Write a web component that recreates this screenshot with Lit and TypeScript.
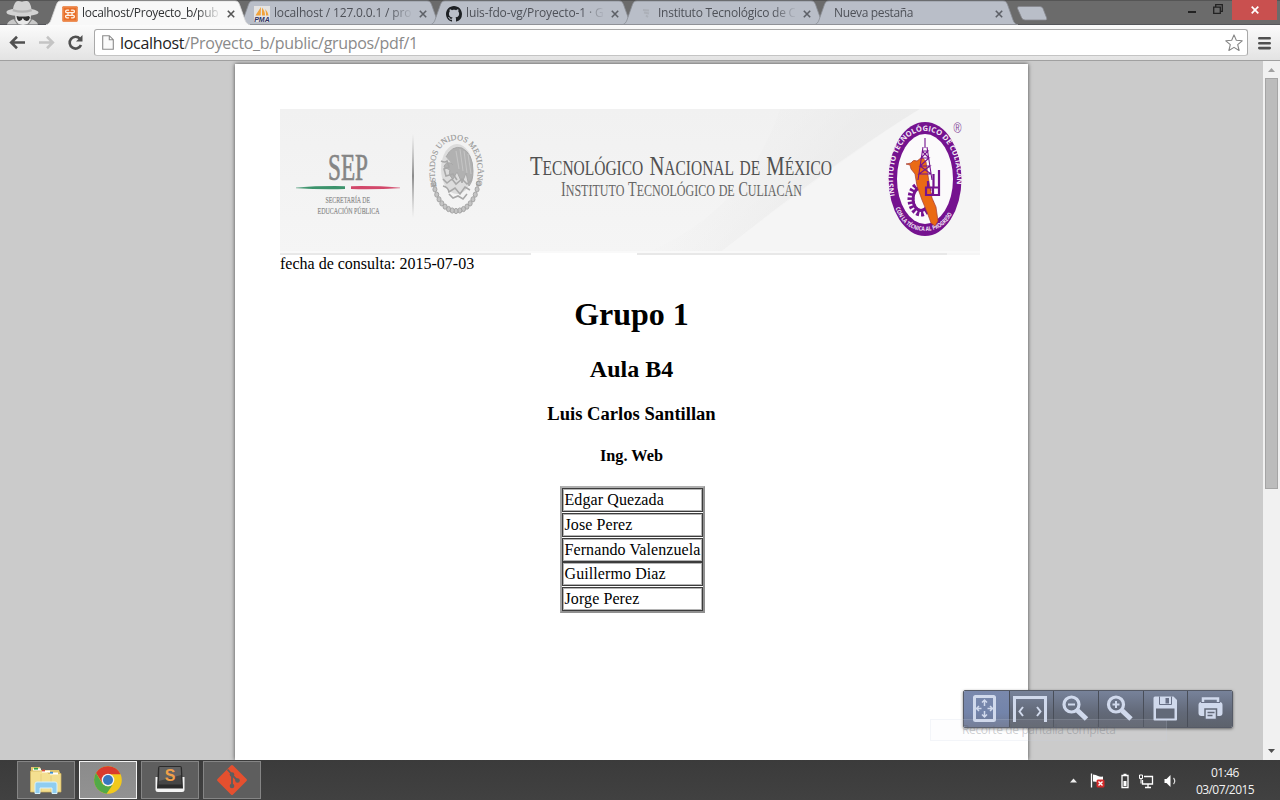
import { LitElement, html, css, svg, nothing } from "lit";
import { customElement, property } from "lit/decorators.js";

type Tab = { title: string; icon: string; active?: boolean; tracking: string };

const TABS: Tab[] = [
  { title: "localhost/Proyecto_b/pub", icon: "xampp", active: true, tracking: "-0.28px" },
  { title: "localhost / 127.0.0.1 / pro", icon: "pma", tracking: "-0.16px" },
  { title: "luis-fdo-vg/Proyecto-1 · G", icon: "github", tracking: "-0.11px" },
  { title: "Instituto Tecnológico de C", icon: "faint", tracking: "-0.25px" },
  { title: "Nueva pestaña", icon: "", tracking: "-0.35px" },
];

const STUDENTS = ["Edgar Quezada", "Jose Perez", "Fernando Valenzuela", "Guillermo Diaz", "Jorge Perez"];

const favicon = (name: string) => {
  switch (name) {
    case "xampp":
      return html`<svg width="16" height="16" viewBox="0 0 16 16">
        <rect x=".3" y=".3" width="15.4" height="15.4" rx="1" fill="#e8702a" />
        <rect x="1.2" y="1.2" width="13.6" height="13.6" rx="1" fill="none" stroke="#f29a62" stroke-width=".7" />
        <path d="M6.500 4.200H5Q3.600 4.200 3.600 5.400T5 6.700H11Q12.400 6.700 12.400 5.400T11 4.200H9.500M6.500 11.800H5Q3.600 11.800 3.600 10.500T5 9.300H11Q12.400 9.300 12.400 10.500T11 11.800H9.500M6 6.700v2.600M10 6.700v2.600" fill="none" stroke="#fff3e8" stroke-width="1.300" stroke-linecap="round" />
      </svg>`;
    case "pma":
      return html`<svg width="16" height="16" viewBox="0 0 16 16">
        <rect width="16" height="16" fill="#e4e3e2" />
        <path d="M7 1C5 4 3 7 1.500 9.500h5.200zM8 1.500v8h3C11 6.500 10 4 8 1.500zM11 3c1 2.500 1.200 4.500 1 6.500h2.500C14 7 13 5 11 3z" fill="#f0a23a" />
        <text class="pma" x=".2" y="15.600" textLength="15.600" lengthAdjust="spacingAndGlyphs">PMA</text>
      </svg>`;
    case "github":
      return html`<svg width="16" height="16" viewBox="0 0 16 16">
        <path fill="#1d2024" d="M8 0C3.580 0 0 3.580 0 8c0 3.540 2.290 6.530 5.470 7.590.4.070.55-.17.55-.38 0-.19-.01-.82-.01-1.490-2.010.37-2.530-.49-2.690-.94-.09-.23-.48-.94-.82-1.130-.28-.15-.68-.52-.01-.53.63-.01 1.080.58 1.230.82.72 1.210 1.870.87 2.330.66.07-.52.28-.87.51-1.070-1.780-.2-3.640-.89-3.640-3.950 0-.87.31-1.590.82-2.150-.08-.2-.36-1.020.08-2.120 0 0 .67-.21 2.200.82.64-.18 1.320-.27 2-.27s1.360.09 2 .27c1.530-1.040 2.200-.82 2.200-.82.44 1.100.16 1.920.08 2.120.51.56.82 1.270.82 2.150 0 3.070-1.870 3.750-3.650 3.950.29.25.54.73.54 1.480 0 1.070-.01 1.930-.01 2.200 0 .21.15.46.55.38A8.010 8.010 0 0 0 16 8c0-4.420-3.580-8-8-8z" />
      </svg>`;
    case "faint":
      return html`<svg width="16" height="16" viewBox="0 0 16 16">
        <path d="M5 4l6 .5M6 6.500l5 1M8 9.500l2 1.500" stroke="#acb0b8" stroke-width="2" fill="none" />
      </svg>`;
  }
  return nothing;
};

@customElement("browser-tab")
class BrowserTab extends LitElement {
  @property({ attribute: false }) tab!: Tab;
  static styles = css`
    :host { display: grid; width: 204px; height: 25px; margin-right: -12px; flex: none; }
    :host([active]) { z-index: 2; }
    .shape, .body { grid-area: 1 / 1; }
    .shape { display: block; }
    .body { display: flex; align-items: center; padding: 2px 12px 0 16px; box-sizing: border-box; height: 25px; z-index: 1; min-width: 0; }
    .body svg { display: block; flex: none; }
    .title { flex: 1; min-width: 0; margin: -1px 0 0 4px; overflow: hidden; white-space: nowrap; font: 12px/18px "Open Sans", sans-serif; color: #4e5158;
      -webkit-mask-image: linear-gradient(90deg, #000 calc(100% - 22px), transparent calc(100% + 2px)); mask-image: linear-gradient(90deg, #000 calc(100% - 22px), transparent calc(100% + 2px)); }
    .title.on { color: #303234; }
    .title.bare { margin-left: 4px; }
    .close { margin: 0 3px 0 8px; }
    .pma { font: italic bold 7px "Liberation Sans", sans-serif; fill: #2f3364; }
  `;
  render() {
    const t = this.tab;
    return html`
      <svg class="shape" width="204" height="25" viewBox="0 0 204 25">
        <path d="M0 25c3-1 4-2.500 5-5L10.500 4.500C11.500 2 12.500 1 15 1H189c2.500 0 3.500 1 4.500 3.500L199 20c1 2.500 2 4 5 5z"
          fill=${t.active ? "#f8f8f8" : "#b9bec8"} stroke=${t.active ? "#d9d9d9" : "#8c8f97"} stroke-width=".8" />
        ${t.active ? svg`<path d="M2 25h200" stroke="#f8f8f8" stroke-width="2"/>` : svg`<path d="M0 24.500h204" stroke="#8f9197"/>`}
      </svg>
      <div class="body">
        ${favicon(t.icon)}
        <span class="title ${t.active ? "on" : ""} ${t.icon ? "" : "bare"}" style="letter-spacing:${t.tracking}">${t.title}</span>
        <svg class="close" width="8" height="8" viewBox="0 0 8 8"><path d="M.8.8l6.400 6.400M7.200.8L.8 7.200" stroke=${t.active ? "#555" : "#5d6067"} stroke-width="1.600" /></svg>
      </div>`;
  }
}

@customElement("letterhead-banner")
class LetterheadBanner extends LitElement {
  static styles = css`
    :host { display: block; height: 146px; }
    svg { display: block; }
    .serif { font-family: "Liberation Serif", serif; }
    .badge { font: bold 7.500px "Open Sans", sans-serif; fill: #f2e9f5; }
    .small { font-size: 6px; }
  `;
  render() {
    const beads = Array.from({ length: 17 }, (_, i) => {
      const a = ((14 + i * 9.500) * Math.PI) / 180;
      return svg`<ellipse cx=${176 + 23 * Math.cos(a)} cy=${66 + 36 * Math.sin(a)} rx="2" ry="2.600" fill="#c4c4c4" stroke="#a4a4a4" stroke-width="1"/>`;
    });
    return html`<svg width="700" height="146" viewBox="0 0 700 146">
      <defs>
        <linearGradient id="bg" x1="0" y1="0" x2="0" y2="1"><stop offset="0" stop-color="#f1f1f1" /><stop offset="1" stop-color="#f5f5f5" /></linearGradient>
        <linearGradient id="fold" gradientUnits="userSpaceOnUse" x1="430" y1="40" x2="520" y2="100"><stop offset="0" stop-color="#ececec" stop-opacity="0" /><stop offset="1" stop-color="#e9e9e9" /></linearGradient>
        <linearGradient id="bar" x1="0" y1="0" x2="0" y2="1"><stop offset="0" stop-color="#aaa" stop-opacity="0" /><stop offset=".5" stop-color="#8c8c8c" /><stop offset="1" stop-color="#aaa" stop-opacity="0" /></linearGradient>
        <linearGradient id="gl" gradientUnits="userSpaceOnUse" x1="16" x2="65" y1="0" y2="0"><stop offset="0" stop-color="#3c936c" stop-opacity=".7" /><stop offset=".25" stop-color="#3c936c" /></linearGradient>
        <linearGradient id="rl" gradientUnits="userSpaceOnUse" x1="71" x2="120" y1="0" y2="0"><stop offset=".75" stop-color="#d2486a" /><stop offset="1" stop-color="#d2486a" stop-opacity=".7" /></linearGradient>
        <path id="eagle" d="M156.500 78C150 44 163 31 176 31S202 44 196 78" />
        <path id="top" d="M615 88C607 50 624 22 645 22S683 50 675 88" />
        <path id="low" d="M615.500 99C622 117 634 122 645 122S668 117 674.500 99" />
      </defs>
      <rect width="700" height="146" fill="url(#bg)" />
      <path d="M370 142C440 112 480 60 500 0H640C565 45 480 112 442 142z" fill="url(#fold)" opacity=".6" />
      <path d="M442 142C500 98 590 30 640 0H700V142z" fill="#f5f5f5" />
      <path d="M0 143H700" stroke="#fdfdfd" stroke-width="1" />
      <path d="M0 145H251M357 145H667" stroke="#e4e4e4" stroke-width="1.500" />
      <path d="M251 145H357" stroke="#fff" stroke-width="2" />

      <g class="serif" fill="#858585" stroke="#858585">
        <text x="48" y="70.500" font-size="38" stroke-width=".7" textLength="40" lengthAdjust="spacingAndGlyphs">SEP</text>
        <g stroke-width=".15" font-size="9">
          <text x="45.500" y="93.500" textLength="44.500" lengthAdjust="spacingAndGlyphs">SECRETARÍA DE</text>
          <text x="37.500" y="104.500" textLength="62" lengthAdjust="spacingAndGlyphs">EDUCACIÓN PÚBLICA</text>
        </g>
      </g>
      <path d="M16 78.400q24-1.600 49-1.200v2.800q-25 .6-49-.8z" fill="url(#gl)" />
      <path d="M71 77.200q25-.4 49 1.200v.8q-24 1.400-49 .8z" fill="url(#rl)" />
      <rect x="132" y="25" width="2" height="84" fill="url(#bar)" />

      <g fill="none" stroke="#a8a8a8">
        <ellipse cx="177" cy="60" rx="16" ry="25" fill="#dcdcdc" stroke="none" />
        <path d="M166 48q6-12 16-9q11 6 11 23q0 10-4 15l-3-13-4 10-5-11-4 7q-5-4-3-9l-6-3q1-5 7-4l2 2" fill="#b1b1b1" stroke-width="1" />
        <path d="M180 40l3 22M184 42l3 22M188 45l3 20M176 42l3 18" stroke="#cacaca" stroke-width=".8" />
        <path d="M161 52q4 2 6 0l2 6-5 2 2 7 7-2 4 6M163 70l4 4 5-4 4 5 6-5 5 5 5-4M163 77q5 1 6 6l6-4 5 6 5-7 5 3M169 85l4 4 5-2 5 3 4-5" stroke-width="1.600" />
      </g>
      ${beads}
      <text class="serif" font-size="8" fill="#999" stroke="#999" stroke-width=".15"><textPath href="#eagle" textLength="120" lengthAdjust="spacingAndGlyphs">ESTADOS UNIDOS MEXICANOS</textPath></text>

      <g class="serif" fill="#505050">
        <text x="250" y="66" font-size="21" word-spacing="3" textLength="302" lengthAdjust="spacingAndGlyphs"><tspan font-size="28">T</tspan>ECNOLÓGICO <tspan font-size="28">N</tspan>ACIONAL DE <tspan font-size="28">M</tspan>ÉXICO</text>
        <text x="281" y="87" font-size="17.500" word-spacing="1" fill="#666" textLength="241" lengthAdjust="spacingAndGlyphs"><tspan font-size="20.500">I</tspan>NSTITUTO <tspan font-size="20.500">T</tspan>ECNOLÓGICO DE <tspan font-size="20.500">C</tspan>ULIACÁN</text>
      </g>

      <ellipse cx="645" cy="70" rx="36.500" ry="57" fill="#75128f" />
      <ellipse cx="645" cy="70" rx="28" ry="45" fill="#fbfafb" />
      <text class="badge"><textPath href="#top" startOffset="1" textLength="150" lengthAdjust="spacingAndGlyphs">INSTITUTO TECNOLÓGICO DE CULIACÁN</textPath></text>
      <text class="badge small"><textPath href="#low" textLength="74" lengthAdjust="spacingAndGlyphs">CON LA TÉCNICA AL PROGRESO</textPath></text>
      <ellipse cx="641" cy="90" rx="10" ry="14" fill="none" stroke="#75128f" stroke-width="7" stroke-dasharray="2.400 1.700" />
      <ellipse cx="641" cy="90" rx="8" ry="11.500" fill="none" stroke="#75128f" stroke-width="3" />
      <path d="M651 74l8 23-7-6z" fill="#fbfafb" />
      <path d="M632 54q2-4 6-2 3-3 6-3l3 4 3 20 3 16 4 9 2 14-3 5-4-3-4-11-5-12-5-14-2-12-4-5-1-4-4-1z" fill="#ea6a14" stroke="#a63c36" stroke-width=".7" transform="translate(-1 0)" />
      <path d="M645 29v10M643 38l-5 33M647 38l5 33M642 42h6l-7 7h8l-9 8h10l-11 8h12M642 42l7 7-9 8 11 8" fill="none" stroke="#75128f" stroke-width="1.100" />
      <path d="M645 78.500h15M645 86h15M646 78v9M653 79v7M659 61v26M653.500 65v13M648 72v7" stroke="#75128f" stroke-width="2.200" />
      <text x="673.500" y="24" font-size="14" fill="#86499b" textLength="8" lengthAdjust="spacingAndGlyphs" font-family="Liberation Sans, sans-serif">®</text>
    </svg>`;
  }
}

@customElement("pdf-page")
class PdfPage extends LitElement {
  static styles = css`
    :host { display: block; width: 793px; height: 696px; margin: 4px 0 0 235px; box-sizing: border-box; padding: 45px 45px 0; background: #fff; box-shadow: 0 0 4px rgba(0,0,0,.65); font: 16px/18px "Liberation Serif", serif; color: #000; overflow: hidden; }
    p, h1, h2, h3, h4 { margin: 0; }
    h1, h2, h3, h4 { text-align: center; }
    letterhead-banner { width: 700px; }
    h1 { font-size: 32px; line-height: 37px; margin-top: 23px; }
    h2 { font-size: 24px; line-height: 28px; margin-top: 22px; }
    h3 { font-size: 18.600px; line-height: 22px; margin-top: 20px; }
    h4 { font-size: 16.300px; line-height: 18px; margin-top: 22px; }
    .list { width: 145px; box-sizing: border-box; margin: 21px 0 0 280px; display: grid; gap: .8px; padding: 0; border: 2px solid; border-color: #b0b0b0 #909090 #909090 #a4a4a4; }
    .cell { height: 24px; line-height: 22px; box-sizing: border-box; border: 1px solid #3c3c3c; box-shadow: inset 0 0 0 1px #b4b4b4; padding-left: 1.500px; white-space: nowrap; letter-spacing: .09px; }
  `;
  render() {
    return html`<letterhead-banner></letterhead-banner>
      <p>fecha de consulta: 2015-07-03</p>
      <h1>Grupo 1</h1><h2>Aula B4</h2><h3>Luis Carlos Santillan</h3><h4>Ing. Web</h4>
      <div class="list">${STUDENTS.map((s) => html`<div class="cell">${s}</div>`)}</div>`;
  }
}

@customElement("viewer-controls")
class ViewerControls extends LitElement {
  static styles = css`
    :host { display: flex; width: 270px; height: 38px; box-sizing: border-box; border: 1px solid #555a66; border-radius: 2px; overflow: hidden; box-shadow: 0 1px 3px rgba(0,0,0,.5); }
    .btn { flex: 1; display: flex; align-items: center; justify-content: center; padding: 0 2px 2px 0; box-sizing: border-box; background: linear-gradient(#77829a, #626978 60%, #5d626c); border-left: 1px solid #494e59; }
    .btn:first-child { padding-right: 3px; border-left: 0; background: linear-gradient(#7a89ad, #7384aa 60%, #6d7791); }
    svg { display: block; }
  `;
  render() {
    const c = "#d0d9ec";
    const icons = [
      svg`<rect x="3.500" y="2.500" width="20" height="24" rx="1" fill="none" stroke=${c} stroke-width="3"/><path d="M13.500 6v6M13.500 17v6M5.500 14.500h5M16.500 14.500h5M11 8.500L13.500 6 16 8.500M11 20.500l2.500 2.500 2.500-2.500M8 12l-2.500 2.500L8 17M19 12l2.500 2.500L19 17" fill="none" stroke=${c} stroke-width="1.500"/>`,
      svg`<path d="M-2.500 28V3.500H28.500V28" fill="none" stroke=${c} stroke-width="3"/><path d="M6 13L2.500 17.500 6 22M20 13l3.500 4.500-3.500 4.500" fill="none" stroke=${c} stroke-width="2"/>`,
      svg`<circle cx="9.500" cy="10.500" r="7.500" fill="none" stroke=${c} stroke-width="3.200"/><path d="M6 10.500h7" stroke=${c} stroke-width="2"/><path d="M15.500 16.500l9 8.500" stroke=${c} stroke-width="5"/>`,
      svg`<circle cx="10" cy="10.500" r="7.500" fill="none" stroke=${c} stroke-width="3.200"/><path d="M6.500 10.500h7M10 7v7" stroke=${c} stroke-width="2"/><path d="M16 16.500l9 8.500" stroke=${c} stroke-width="5"/>`,
      svg`<path d="M4 2.500H22.500l3.500 3.500v19.500q0 1-1 1H3.500q-1 0-1-1V4q0-1.500 1.500-1.500z" fill=${c}/><path d="M8.500 2.500v8h12v-8" fill="none" stroke="#687086"/><rect x="14.500" y="4" width="3.500" height="5.500" fill="#687086"/><rect x="5" y="14.500" width="18.500" height="10" fill="#626978"/>`,
      svg`<g transform="translate(1 0)"><path d="M6 4.500h15v5H6z" fill="none" stroke=${c} stroke-width="2.500"/><rect x="1.500" y="8" width="24" height="14" rx="3" fill=${c}/><path d="M4 8.500h19" stroke="#687086" stroke-width="1"/><path d="M8 15h11.500v10.500H8z" fill=${c} stroke="#626978" stroke-width="1.500"/><path d="M10.500 18.500h7M10.500 21.500h5" stroke="#626978" stroke-width="1.300"/></g>`,
    ];
    return icons.map((i) => html`<div class="btn"><svg width="27" height="29" viewBox="0 0 27 29" overflow="visible">${i}</svg></div>`);
  }
}

@customElement("app-root")
class AppRoot extends LitElement {
  static styles = css`
    :host { display: flex; flex-direction: column; width: 1280px; height: 800px; overflow: hidden; font-family: "Open Sans", sans-serif; }
    svg { display: block; flex: none; }
    .strip { display: flex; height: 25px; background: linear-gradient(#555 0 1px, #6b6b6b 1px 24px, #55565a 24px); flex: none; }
    .incog { width: 46px; display: flex; justify-content: flex-start; }
    .newtab { margin-left: 10px; }
    .wins { margin-left: auto; display: flex; align-items: flex-start; padding-right: 3px; }
    .min { width: 8px; height: 2px; background: #222; margin: 11px 17px 0 0; }
    .restore { margin: 4px 9px 0 0; }
    .x { width: 45px; height: 20px; background: #c9504f; display: grid; place-items: center; }
    .bar { height: 36px; flex: none; box-sizing: border-box; display: flex; align-items: flex-start; background: linear-gradient(#fbfbfb, #e3e3e3); border-bottom: 1px solid #a0a0a0; padding: 4px 9px 0 9px; position: relative; z-index: 3; }
    .nav { margin-top: 5px; }
    .nav + .nav { margin-left: 12px; }
    .omni { flex: 1; margin: 0 10px 0 10px; height: 27px; box-sizing: border-box; border: 1px solid #a9a9a9; border-bottom-color: #c4c4c4; border-radius: 3px; background: #fff; display: flex; align-items: center; padding: 0 4px 0 7px; }
    .url { flex: 1; margin-left: 6px; font: 16px/24px "Open Sans", sans-serif; letter-spacing: -.31px; color: #8a8a8a; white-space: nowrap; }
    .url b { font-weight: 400; color: #222; }
    .menu { margin-top: 8px; }
    .view { height: 699px; flex: none; display: flex; background: #cbcbcb; position: relative; overflow: hidden; }
    .doc { flex: 1; height: 699px; overflow: hidden; }
    pdf-page { margin-top: 3px; }
    .scroll { width: 17px; box-sizing: border-box; background: #f1f1f1; display: flex; flex-direction: column; align-items: center; padding: 7px 0 7px; }
    .thumb { width: 13px; height: 411px; box-sizing: border-box; background: #bcbcbc; border: 1px solid #a5a5a5; margin: 6px 0 auto; }
    viewer-controls { position: absolute; left: 963px; top: 629px; }
    .tip { position: absolute; left: 930px; top: 658px; width: 237px; height: 22px; box-sizing: border-box; border: 1px solid rgba(190,205,225,.16); background: rgba(225,232,242,.07); padding-left: 31px; font: 12px/20px "Open Sans", sans-serif; letter-spacing: -.36px; color: rgba(90,95,105,.3); white-space: nowrap; }
    .task { height: 40px; flex: none; background: linear-gradient(#3b3b3b, #414141); display: flex; align-items: center; padding-left: 17px; gap: 4px; color: #f2f2f2; }
    .app { width: 58px; height: 38px; box-sizing: border-box; border: 1px solid #858585; background: #5e5e5e; display: grid; place-items: center; }
    .app.on { background: linear-gradient(#8b8b8b, #929292); border-color: #f2f2f2; }
    .tray { margin-left: auto; display: flex; align-items: center; }
    .clock { width: 76px; margin: 0 17px 0 9px; text-align: center; font-size: 12px; line-height: 17px; letter-spacing: -.55px; white-space: nowrap; padding-top: 1px; }
    .sub { font: bold 16px "Liberation Sans", sans-serif; fill: #f0a04a; }
  `;
  render() {
    return html`
      <div class="strip">
        <div class="incog"><svg width="42" height="25" viewBox="0 0 42 25">
          <path d="M7 24.500q1-4 7-5.500l8 2 9-2q6 2 7 5.500z" fill="#c9c9c9" />
          <path d="M15 14q0 11 8 11t8-11z" fill="#e9e9e9" />
          <path d="M13 9q1.500-8 5-8 2 0 4 .8Q24 .8 27 1q3 0 4.500 8 7 1.500 7 3.500c0 2-7 3.500-16.500 3.500S6.500 14.500 6.500 12.500 8 10 13 9z" fill="#d2d2d2" />
          <path d="M13 9q9 3 18.500 0l.5 2.200q-9 3-19.500 0z" fill="#b3b3b3" />
          <path d="M16.500 16q5 1 12.500 0l1 1.500q-1 3.500-3.500 3.500t-3.700-3q-1 3-3.300 3-2.500 0-3-5z" fill="#303030" />
          <path d="M14 19l4 5.500M32 19l-4 5.500" stroke="#828282" stroke-width="1.200" />
        </svg></div>
        ${TABS.map((t) => html`<browser-tab .tab=${t} ?active=${!!t.active}></browser-tab>`)}
        <svg class="newtab" width="34" height="25" viewBox="0 0 34 25"><path d="M3 6.500H24q2 0 3 2l3.500 9q1 2.500-1 2.500H9q-2.500 0-3.500-2.500L1.500 8.500Q1 6.500 3 6.500z" fill="#b9bec8" stroke="#85878d" stroke-width=".8" /></svg>
        <div class="wins">
          <div class="min"></div>
          <svg class="restore" width="10" height="10" viewBox="0 0 10 10"><path d="M.7 3.200h6.600v6.100H.7zM2.700 2.800V.7h6.600v6.600H7.500" fill="none" stroke="#222" stroke-width="1.300" /></svg>
          <div class="x"><svg width="8" height="8" viewBox="0 0 8 8"><path d="M.7.7l6.600 6.600M7.300.7L.7 7.300" stroke="#fff" stroke-width="1.700" /></svg></div>
        </div>
      </div>

      <div class="bar">
        <svg class="nav" width="17" height="17" viewBox="0 0 17 17"><path d="M16 8.500H3M8 2.800L2.200 8.500 8 14.200" fill="none" stroke="#505050" stroke-width="2.600" /></svg>
        <svg class="nav" width="17" height="17" viewBox="0 0 17 17"><path d="M1 8.500h13M9 2.800l5.800 5.700L9 14.200" fill="none" stroke="#c4c4c4" stroke-width="2.600" /></svg>
        <svg class="nav" width="17" height="17" viewBox="0 0 17 17"><path d="M13 4.800A5.900 5.900 0 1 0 14 11" fill="none" stroke="#505050" stroke-width="2.600" /><path d="M15.500 1v6.500H9z" fill="#505050" /></svg>
        <div class="omni">
          <svg width="12" height="15" viewBox="0 0 12 15"><path d="M.7.7h6.600l4 4v9.600H.7zM7.300.7v4h4" fill="#fafafa" stroke="#8a8a8a" stroke-width="1.100" /></svg>
          <span class="url"><b>localhost</b>/Proyecto_b/public/grupos/pdf/1</span>
          <svg width="18" height="18" viewBox="0 0 18 18"><path d="M9 .9l2.300 5.400 5.900.5-4.500 3.900 1.400 5.800L9 13.400l-5.100 3.100 1.400-5.800L.8 6.800l5.900-.5z" fill="#fff" stroke="#858585" stroke-width="1.100" stroke-linejoin="round" /></svg>
        </div>
        <svg class="menu" width="13" height="13" viewBox="0 0 13 13"><path d="M1.300 1.300h10.400M1.300 6.200h10.400M1.300 11.100h10.400" stroke="#505050" stroke-width="2.600" stroke-linecap="round" /></svg>
      </div>

      <div class="view">
        <div class="doc"><pdf-page></pdf-page></div>
        <div class="scroll">
          <svg width="7" height="4" viewBox="0 0 7 4"><path d="M0 4L3.500 0 7 4z" fill="#a0a0a0" /></svg>
          <div class="thumb"></div>
          <svg width="7" height="4" viewBox="0 0 7 4"><path d="M0 0h7L3.500 4z" fill="#505050" /></svg>
        </div>
        <viewer-controls></viewer-controls>
        <div class="tip">Recorte de pantalla completa</div>
      </div>

      <div class="task">
        <div class="app"><svg width="34" height="32" viewBox="0 0 34 32">
          <path d="M2 3h9l1 3h18l1 3v19H2z" fill="#e2c66c" />
          <path d="M1.500 7h16l2 2.500H32V28H1.500z" fill="#f4df90" stroke="#d2b45c" stroke-width=".7" />
          <path d="M4 5.500h8M13 7.500h8M21 9.500h8" stroke="#fff" stroke-width="2" />
          <path d="M5 4.700h4" stroke="#2fa243" stroke-width="1.800" /><path d="M13 6.500h3" stroke="#d24b3a" stroke-width="1.800" /><path d="M21 8.700h3" stroke="#3c8ed0" stroke-width="1.800" />
          <path d="M12 10v18M22 12v16" stroke="#e3ca78" stroke-width=".8" />
          <path d="M6 29.500V20q0-2 2-2h18q2 0 2 2v9.500h-5V24H11v5.500z" fill="#8fcdf0" stroke="#d7f1fc" />
        </svg></div>
        <div class="app on"><svg width="28" height="28" viewBox="0 0 28 28">
          <circle cx="14" cy="14" r="13.800" fill="#f2c91d" />
          <path d="M2 7A13.800 13.800 0 0 1 26.500 8.300H14L8.500 17z" fill="#d83a2e" />
          <path d="M2 7l6.500 11 5.500 2.500 4.500-1.500-6 8.700A13.800 13.800 0 0 1 2 7z" fill="#52a947" />
          <circle cx="14" cy="14" r="6.300" fill="#f3f3f3" /><circle cx="14" cy="14" r="5" fill="#3877bf" />
        </svg></div>
        <div class="app"><svg width="32" height="30" viewBox="0 0 32 30">
          <path d="M1.500 12h29v12.500q0 2.500-2.500 2.500H4q-2.500 0-2.500-2.500z" fill="#f4f4f4" />
          <path d="M4 3q0-2 2-2h20q2 0 2 2l1 20.500H3z" fill="#2b2b2b" /><path d="M5.500 2h21l1 17.500h-23z" fill="#464646" /><path d="M5.500 2h21l.6 8L5 16z" fill="#626262" />
          <text class="sub" x="16" y="16" text-anchor="middle">S</text>
        </svg></div>
        <div class="app"><svg width="34" height="34" viewBox="0 0 34 34">
          <rect x="6" y="6" width="22" height="22" rx="1.500" transform="rotate(45 17 17)" fill="#e5502f" />
          <path d="M12.500 6.500L17 11.500v12M17 12l6 6" stroke="#5e5e5e" stroke-width="1.800" fill="none" />
          <circle cx="17" cy="11.500" r="2.300" fill="#5e5e5e" /><circle cx="17" cy="23" r="2.300" fill="#5e5e5e" /><circle cx="22.500" cy="17.500" r="2.300" fill="#5e5e5e" />
        </svg></div>
        <div class="tray">
          <svg width="109" height="22" viewBox="0 -1.500 109 22">
            <path d="M1 12l3.500-4L8 12z" fill="#eee" />
            <path d="M22.500 3v14" stroke="#fff" stroke-width="1.300" /><path d="M24 4q3 0 5 1.500 2 1 5 .5v7q-3 .5-5-.8Q27 11 24 11z" fill="#fff" />
            <rect x="27.500" y="9" width="8" height="8" rx="1.500" fill="#d52b2b" /><path d="M29.500 11l4 4M33.500 11l-4 4" stroke="#fff" stroke-width="1.400" />
            <path d="M53 5h6v12h-6zM54.500 4h3" fill="none" stroke="#fff" stroke-width="1.300" /><rect x="54.500" y="10.500" width="3" height="5" fill="#fff" />
            <path d="M75 6h8.500v7.500H73.500V9.500M76 17h6M79 13.500v3" fill="none" stroke="#fff" stroke-width="1.300" /><path d="M70.500 4.500h3V8h-3zM72 8v5" fill="none" stroke="#fff" />
            <path d="M95.500 8.500h2l4-4v12l-4-4h-2z" fill="#fff" /><path d="M104.500 7.500q2.500 3 0 6" fill="none" stroke="#ddd" stroke-width="1.200" />
          </svg>
          <div class="clock">01:46<br />03/07/2015</div>
        </div>
      </div>`;
  }
}
